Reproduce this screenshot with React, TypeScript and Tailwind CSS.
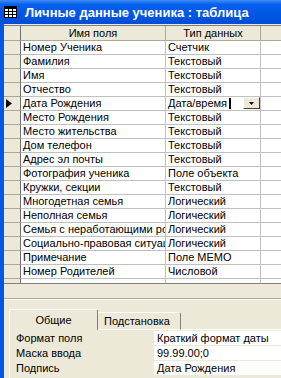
import React from 'react';

const fields = [
  { name: 'Номер Ученика', type: 'Счетчик' },
  { name: 'Фамилия', type: 'Текстовый' },
  { name: 'Имя', type: 'Текстовый' },
  { name: 'Отчество', type: 'Текстовый' },
  { name: 'Дата Рождения', type: 'Дата/время', selected: true },
  { name: 'Место Рождения', type: 'Текстовый' },
  { name: 'Место жительства', type: 'Текстовый' },
  { name: 'Дом телефон', type: 'Текстовый' },
  { name: 'Адрес эл почты', type: 'Текстовый' },
  { name: 'Фотография ученика', type: 'Поле объекта' },
  { name: 'Кружки, секции', type: 'Текстовый' },
  { name: 'Многодетная семья', type: 'Логический' },
  { name: 'Неполная семья', type: 'Логический' },
  { name: 'Семья с неработающими родителями', type: 'Логический' },
  { name: 'Социально-правовая ситуация', type: 'Логический' },
  { name: 'Примечание', type: 'Поле MEMO' },
  { name: 'Номер Родителей', type: 'Числовой' },
];

const props = [
  { label: 'Формат поля', value: 'Краткий формат даты' },
  { label: 'Маска ввода', value: '99.99.00;0' },
  { label: 'Подпись', value: 'Дата Рождения' },
];

function TableIcon() {
  return (
    <svg width="13" height="12" viewBox="0 0 13 12" className="shrink-0">
      <rect x="0.5" y="0.5" width="12" height="11" fill="#fff" stroke="#000" />
      <rect x="1" y="1" width="11" height="2" fill="#000" />
      <path d="M0.5 5.5H12.5M0.5 8.5H12.5M4.5 3V11.5M8.5 3V11.5" stroke="#000" />
    </svg>
  );
}

function FieldRow({ name, type, selected }: { name: string; type: string; selected?: boolean }) {
  return (
    <div className="flex h-[14px]">
      <div className="w-[17px] shrink-0 flex items-center pl-[2px] bg-[#ECE9D8] border-r border-b border-r-[#6F6F6F] border-b-[#ACA899]">
        {selected && (
          <svg width="6" height="9" viewBox="0 0 6 9">
            <path d="M0 0L6 4.5L0 9Z" fill="#000" />
          </svg>
        )}
      </div>
      <div className="w-[145px] shrink-0 flex items-center pl-[2px] bg-white border-r border-b border-[#C0C0C0] overflow-hidden whitespace-nowrap">
        {name}
      </div>
      <div className="w-[95px] shrink-0 flex items-center pl-[2px] bg-white border-r border-b border-[#C0C0C0] overflow-hidden whitespace-nowrap">
        {type}
        {selected && (
          <>
            <span className="ml-[2px] w-[2px] h-[11px] bg-black" />
            <span className="ml-auto self-start w-[17px] h-[12px] flex items-center justify-center bg-[#ECE9D8] border-t border-l border-white border-b border-r border-b-[#404040] border-r-[#404040]">
              <svg width="5" height="3" viewBox="0 0 5 3">
                <path d="M0 0H5L2.5 3Z" fill="#000" />
              </svg>
            </span>
          </>
        )}
      </div>
      <div className="flex-1 bg-white border-b border-[#C0C0C0]" />
    </div>
  );
}

export default function App() {
  return (
    <div className="w-[281px] h-[378px] overflow-hidden flex flex-col bg-[#ECE9D8] text-[11px] leading-[13px] text-black font-['Liberation_Sans',Arial,sans-serif]">
      {/* title bar */}
      <div className="h-[24px] shrink-0 flex items-center gap-[8px] pl-[4px] bg-[linear-gradient(to_bottom,#3D8EF6_0%,#0860EE_18%,#0056E4_60%,#004DD6_100%)]">
        <TableIcon />
        <span className="text-white font-bold text-[13px] whitespace-nowrap">Личные данные ученика : таблица</span>
      </div>

      <div className="flex flex-1 min-h-0">
        <div className="w-[4px] shrink-0 bg-[#0058E6]" />
        <div className="flex-1 min-w-0 flex flex-col">
          <div className="h-[1px] bg-[#ECE9D8]" />
          {/* field grid */}
          <div className="border-t border-[#808080]">
            <div className="flex h-[15px]">
              <div className="w-[17px] shrink-0 bg-[#ECE9D8] border-r border-b border-r-[#6F6F6F] border-b-[#ACA899]" />
              <div className="w-[145px] shrink-0 flex items-center justify-center bg-[#ECE9D8] border-r border-b border-[#ACA899]">Имя поля</div>
              <div className="w-[95px] shrink-0 flex items-center justify-center bg-[#ECE9D8] border-r border-b border-[#ACA899]">Тип данных</div>
              <div className="flex-1 bg-[#ECE9D8] border-b border-[#ACA899]" />
            </div>
            {fields.map((f) => (
              <FieldRow key={f.name} {...f} />
            ))}
            <div className="flex h-[5px] border-b border-[#808080]">
              <div className="w-[17px] shrink-0 bg-[#ECE9D8] border-r border-r-[#6F6F6F]" />
              <div className="w-[145px] shrink-0 bg-white border-r border-[#C0C0C0]" />
              <div className="w-[95px] shrink-0 bg-white border-r border-[#C0C0C0]" />
              <div className="flex-1 bg-white" />
            </div>
          </div>

          {/* splitter */}
          <div className="h-[14px]" />
          <div className="h-[1px] bg-[#ACA899]" />
          <div className="h-[1px] bg-white" />

          {/* properties panel */}
          <div className="flex-1 flex flex-col pt-[9px] pl-[5px]">
            <div className="flex items-end h-[21px]">
              <div className="w-[89px] h-[21px] flex items-center justify-center rounded-t-[2px] border-l border-t border-white border-r border-r-[#808080]">
                Общие
              </div>
              <div className="w-[83px] h-[18px] flex items-center pl-[6px] rounded-tr-[2px] border-t border-white border-r border-r-[#808080] border-b border-b-white">
                Подстановка
              </div>
              <div className="flex-1 h-[1px] bg-white" />
            </div>
            <div className="flex-1 flex flex-col gap-[1px] pt-[1px] border-l border-white">
              {props.map((p) => (
                <div key={p.label} className="flex h-[14px]">
                  <div className="w-[144px] shrink-0 flex items-center pl-[6px] whitespace-nowrap">{p.label}</div>
                  <div className="flex-1 flex items-center pl-[3px] bg-white whitespace-nowrap overflow-hidden">{p.value}</div>
                </div>
              ))}
            </div>
          </div>
        </div>
      </div>
    </div>
  );
}
